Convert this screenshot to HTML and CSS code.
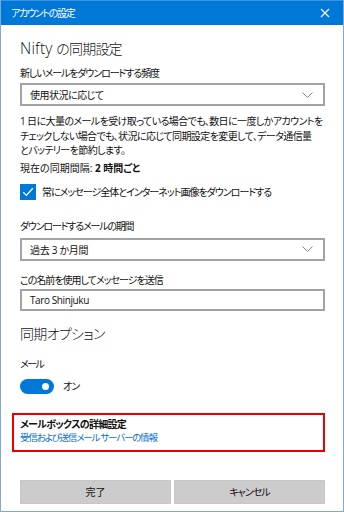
FILE: index.html
```html
<!DOCTYPE html>
<html lang="ja">
<head>
<meta charset="utf-8">
<link rel="stylesheet" href="styles.css">
</head>
<body>
<div class="window">
  <div class="titlebar">
    <span class="title">アカウントの設定</span>
    <svg class="close" width="10" height="10" viewBox="0 0 10 10"><path d="M1 1 L9 9 M9 1 L1 9" stroke="#fff" stroke-width="1.1" fill="none"/></svg>
  </div>
  <div class="content">
    <h1 class="heading"><span class="latin">Nifty</span> <span class="jp">の同期設定</span></h1>
    <div class="label l1">新しいメールをダウンロードする頻度</div>
    <div class="select s1"><span class="sel-text t1">使用状況に応じて</span>
      <svg class="chev" width="11" height="6" viewBox="0 0 11 6"><path d="M0.5 0.5 L5.5 5.5 L10.5 0.5" stroke="#888" stroke-width="1" fill="none"/></svg>
    </div>
    <p class="desc">1 日に大量のメールを受け取っている場合でも、数日に一度しかアカウントを<br>チェックしない場合でも、状況に応じて同期設定を変更して、データ通信量<br>とバッテリーを節約します。</p>
    <div class="label interval">現在の同期間隔: <b>2 時間ごと</b></div>
    <div class="check-row">
      <span class="checkbox"><svg width="16" height="16" viewBox="0 0 16 16"><path d="M3.2 8.2 L6.4 11.4 L12.8 4.2" stroke="#fff" stroke-width="1.3" fill="none"/></svg></span>
      <span class="label check-label">常にメッセージ全体とインターネット画像をダウンロードする</span>
    </div>
    <div class="label l2">ダウンロードするメールの期間</div>
    <div class="select s2"><span class="sel-text t2">過去 3 か月間</span>
      <svg class="chev" width="11" height="6" viewBox="0 0 11 6"><path d="M0.5 0.5 L5.5 5.5 L10.5 0.5" stroke="#888" stroke-width="1" fill="none"/></svg>
    </div>
    <div class="label l3">この名前を使用してメッセージを送信</div>
    <div class="input">Taro Shinjuku</div>
    <h2 class="heading h2"><span class="jp">同期オプション</span></h2>
    <div class="label l4">メール</div>
    <div class="toggle-row">
      <span class="toggle"><span class="knob"></span></span>
      <span class="label on">オン</span>
    </div>
    <div class="advanced">
      <div class="adv-title">メールボックスの詳細設定</div>
      <div class="adv-link">受信および送信メール サーバーの情報</div>
    </div>
    <div class="buttons">
      <div class="btn"><span class="b1">完了</span></div>
      <div class="btn"><span class="b2">キャンセル</span></div>
    </div>
  </div>
</div>
</body>
</html>
```
FILE: styles.css
```css
* { box-sizing: border-box; }
html, body { margin: 0; padding: 0; background: #fff; }
body {
  font-family: "Open Sans", "Noto Sans CJK JP", sans-serif;
  font-feature-settings: "palt";
  color: #111;
  width: 344px;
  height: 512px;
  overflow: hidden;
}
.window {
  width: 344px;
  height: 512px;
  border: 1px solid #7fa9d6;
  border-top: none;
  background: #fff;
}
.titlebar {
  height: 25px;
  background: #0078d7;
  border-top: 1px solid #3c93de;
  display: flex;
  align-items: center;
  justify-content: space-between;
  padding: 0 13px 0 10px;
  color: #fff;
}
.title { font-size: 10px; line-height: 14px; letter-spacing: -1.3px; }
.close { display: block; }
.content { padding: 0 18px 0 19px; }
.heading {
  margin: 12px 0 0;
  font-weight: 300;
  font-size: 14px;
  line-height: 22px;
  color: #111;
  white-space: nowrap;
}
.heading .latin { font-size: 15.5px; letter-spacing: 0.2px; }
.heading .jp { letter-spacing: -0.8px; }
.label {
  font-size: 10px;
  line-height: 16px;
  color: #111;
  letter-spacing: -1px;
  white-space: nowrap;
}
.l1 { margin-top: 5px; letter-spacing: -1.1px; }
.select, .input {
  border: 2px solid #a3a3a3;
  height: 23px;
  display: flex;
  align-items: center;
  justify-content: space-between;
  padding: 0 10px 0 8px;
  font-size: 10px;
  color: #111;
  white-space: nowrap;
}
.t1 { letter-spacing: -0.5px; }
.t2 { letter-spacing: -0.3px; }
.s1 { margin-top: 2px; }
.chev { display: block; }
.desc {
  margin: 8px 0 0;
  font-size: 10px;
  line-height: 14.5px;
  color: #111;
  letter-spacing: -0.6px;
  white-space: nowrap;
}
.interval { margin-top: 2px; letter-spacing: 0; }
.interval b { font-weight: 700; }
.check-row {
  margin-top: 8px;
  display: flex;
  align-items: center;
  gap: 6px;
  height: 16px;
}
.checkbox {
  width: 16px; height: 16px;
  background: #0078d7;
  display: block;
  flex: none;
}
.checkbox svg { display: block; }
.check-label { letter-spacing: -1px; }
.l2 { margin-top: 18px; letter-spacing: -1.2px; }
.s2 { margin-top: 4px; }
.l3 { margin-top: 11px; letter-spacing: -1px; }
.input { margin-top: 1px; height: 22px; letter-spacing: -0.4px; }
.h2 { margin-top: 12px; }
.h2 .jp { letter-spacing: -0.7px; }
.l4 { margin-top: 11px; letter-spacing: -1.5px; }
.toggle-row {
  margin-top: 7px;
  display: flex;
  align-items: center;
  gap: 9px;
  height: 15px;
}
.toggle {
  position: relative;
  width: 34px; height: 15px;
  border-radius: 8px;
  background: #0078d7;
  display: block;
}
.knob {
  position: absolute;
  right: 5px; top: 4px;
  width: 7px; height: 7px;
  border-radius: 50%;
  background: #fff;
}
.on { letter-spacing: -1px; }
.advanced {
  margin: 19px 0 0 -8px;
  border: 2.5px solid #ee0000;
  height: 39px;
  padding: 3px 6px 0;
  white-space: nowrap;
}
.adv-title { font-size: 10px; font-weight: 700; line-height: 13px; color: #111; letter-spacing: -0.7px; }
.adv-link { font-size: 9.5px; line-height: 13px; color: #0a6fd0; letter-spacing: -1.2px; }
.buttons {
  margin-top: 28px;
  display: grid;
  grid-template-columns: 1fr 1fr;
  gap: 3px;
}
.btn {
  height: 24px;
  background: #cccccc;
  border: 1px solid #c6c6c6;
  display: flex;
  align-items: center;
  justify-content: center;
  font-size: 10px;
  color: #111;
}
.b1 { letter-spacing: 0; }
.b2 { letter-spacing: -1px; }
```
